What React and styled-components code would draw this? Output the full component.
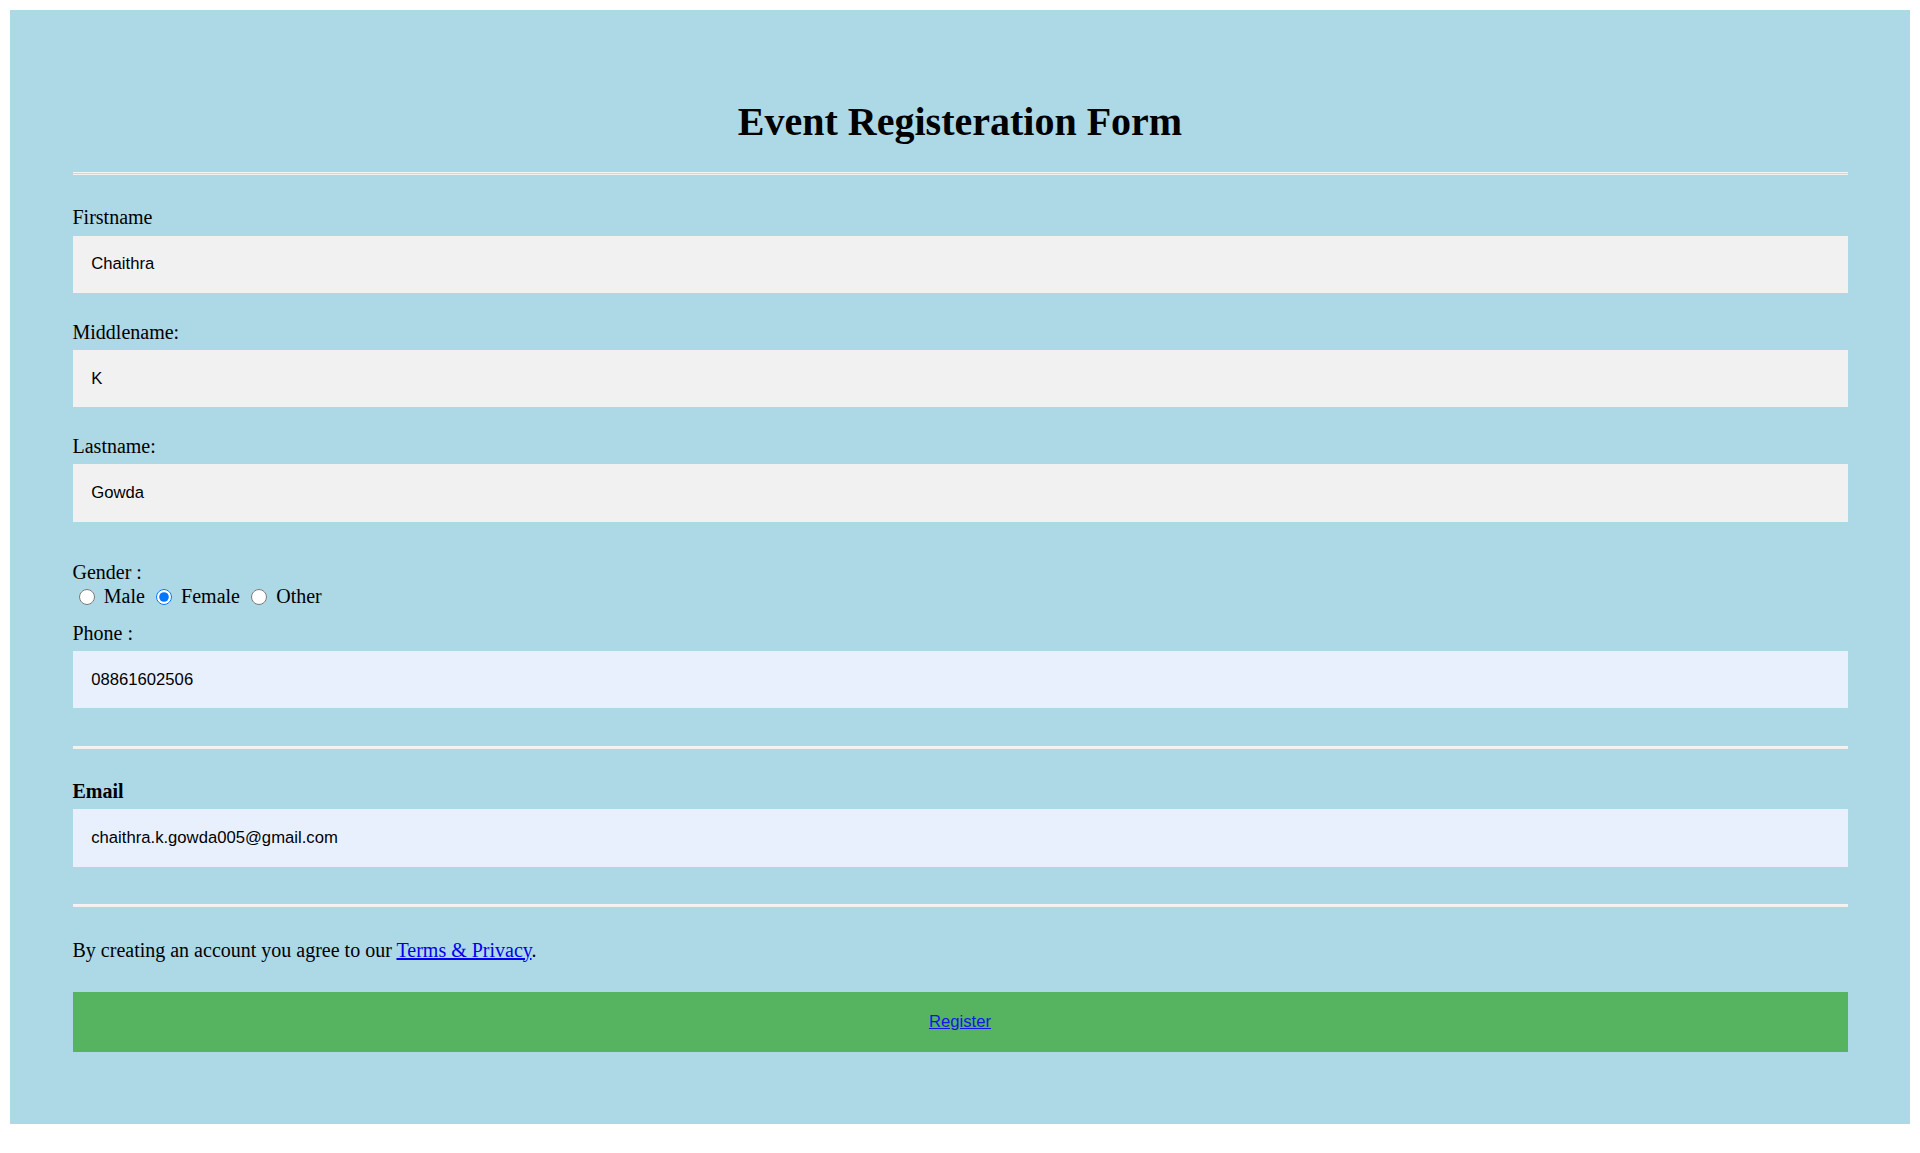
import React from "react";
import styled, { createGlobalStyle } from "styled-components";

const GlobalStyle = createGlobalStyle`
  html, body {
    margin: 0;
    padding: 0;
    background: #ffffff;
  }
  body {
    margin: 10px;
    font-family: "Liberation Serif", "Times New Roman", serif;
    font-size: 20px;
    color: #000;
  }
`;

const Container = styled.form`
  background: #add8e6;
  padding: 62.5px;
`;

const Title = styled.h1`
  margin: 26.8px 0;
  font-size: 40px;
  line-height: 46px;
  font-weight: bold;
  text-align: center;
`;

const Rule = styled.hr`
  margin: ${(p) => (p.$double ? "10px" : "37.5px")} 0 31.25px;
  height: ${(p) => (p.$double ? "1px" : "0")};
  border: none;
  border-top: 1px solid #f4f4f4;
  border-bottom: ${(p) => (p.$double ? "1px" : "2px")} solid #f1f1f1;
  background: #d2d6d8;
`;

const FieldLabel = styled.label`
  display: block;
  line-height: 23px;
  font-weight: ${(p) => (p.$bold ? "bold" : "normal")};
  margin-top: ${(p) => p.$top || "0"};
`;

const TextInput = styled.input`
  display: block;
  box-sizing: border-box;
  width: 100%;
  margin: 6.25px 0 27.5px;
  padding: 18.75px;
  border: none;
  outline: none;
  background: ${(p) => (p.$autofill ? "#e8f0fe" : "#f1f1f1")};
  font-family: "Liberation Sans", Arial, sans-serif;
  font-size: 16.67px;
  line-height: 20px;
  color: #000;
`;

const RadioRow = styled.div`
  line-height: 23px;
  padding: 1px 0 3px;
`;

const Radio = styled.input`
  width: 16.25px;
  height: 16.25px;
  margin: 3.75px 3.75px 0 6.25px;
  vertical-align: -2px;
`;

const Note = styled.p`
  margin: 20px 0;
  line-height: 23px;
`;

const TermsLink = styled.a`
  color: #0000ee;
  text-decoration: underline;
`;

const RegisterButton = styled.button`
  display: block;
  box-sizing: border-box;
  width: 100%;
  margin: 30px 0 10px;
  padding: 20px 25px;
  border: none;
  background: #56b35f;
  cursor: pointer;
  font-family: "Liberation Sans", Arial, sans-serif;
  font-size: 16.67px;
  line-height: 20px;
  text-align: center;
`;

const ButtonLink = styled.a`
  color: #1116ed;
  text-decoration: underline;
`;

export default function App() {
  return (
    <>
      <GlobalStyle />
      <Container onSubmit={(e) => e.preventDefault()}>
        <Title>Event Registeration Form</Title>
        <Rule $double />

        <FieldLabel htmlFor="first">Firstname</FieldLabel>
        <TextInput id="first" type="text" value="Chaithra" readOnly />

        <FieldLabel htmlFor="middle">Middlename:</FieldLabel>
        <TextInput id="middle" type="text" value="K" readOnly />

        <FieldLabel htmlFor="last">Lastname:</FieldLabel>
        <TextInput id="last" type="text" value="Gowda" readOnly />

        <FieldLabel $top="39.5px">Gender :</FieldLabel>
        <RadioRow>
          <Radio type="radio" name="gender" value="male" readOnly /> Male{" "}
          <Radio type="radio" name="gender" value="female" checked readOnly /> Female{" "}
          <Radio type="radio" name="gender" value="other" readOnly /> Other
        </RadioRow>

        <FieldLabel htmlFor="phone" $top="10.5px">Phone :</FieldLabel>
        <TextInput id="phone" type="text" value="08861602506" $autofill readOnly />

        <Rule />

        <FieldLabel htmlFor="email" $bold>Email</FieldLabel>
        <TextInput
          id="email"
          type="text"
          value="chaithra.k.gowda005@gmail.com"
          $autofill
          readOnly
        />

        <Rule />

        <Note>
          By creating an account you agree to our{" "}
          <TermsLink href="#">Terms &amp; Privacy</TermsLink>.
        </Note>

        <RegisterButton type="submit">
          <ButtonLink href="#">Register</ButtonLink>
        </RegisterButton>
      </Container>
    </>
  );
}
